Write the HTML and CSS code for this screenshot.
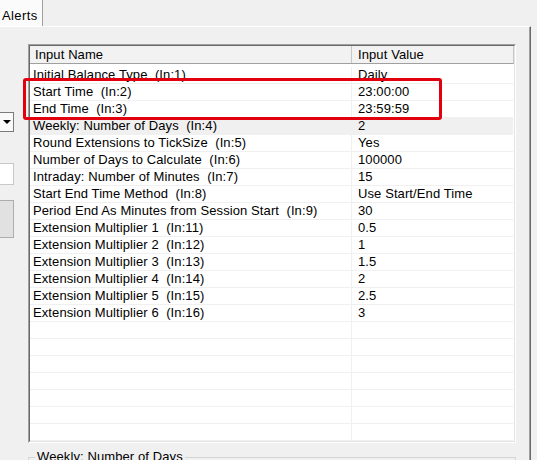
FILE: index.html
```html
<!DOCTYPE html>
<html>
<head>
<meta charset="utf-8">
<link rel="stylesheet" href="styles.css">
</head>
<body>
<div class="tabs"><div class="tab">Alerts</div></div>
<div class="panel">
  <div class="side">
    <div class="combo"><span class="arrow"></span></div>
    <div class="textbox"></div>
    <div class="button"></div>
  </div>
  <div class="main">
    <div class="grid">
      <div class="grid-inner">
        <div class="hrow"><div class="hcell first">Input Name</div><div class="hcell">Input Value</div></div>
        <div class="gap"></div>
        <div class="row"><div class="cell name">Initial Balance Type&nbsp;&nbsp;(In:1)</div><div class="cell val">Daily</div></div>
        <div class="row"><div class="cell name">Start Time&nbsp;&nbsp;(In:2)</div><div class="cell val">23:00:00</div></div>
        <div class="row"><div class="cell name">End Time&nbsp;&nbsp;(In:3)</div><div class="cell val">23:59:59</div></div>
        <div class="row sel"><div class="cell name">Weekly: Number of Days&nbsp;&nbsp;(In:4)</div><div class="cell val">2</div></div>
        <div class="row"><div class="cell name">Round Extensions to TickSize&nbsp;&nbsp;(In:5)</div><div class="cell val">Yes</div></div>
        <div class="row"><div class="cell name">Number of Days to Calculate&nbsp;&nbsp;(In:6)</div><div class="cell val">100000</div></div>
        <div class="row"><div class="cell name">Intraday: Number of Minutes&nbsp;&nbsp;(In:7)</div><div class="cell val">15</div></div>
        <div class="row"><div class="cell name">Start End Time Method&nbsp;&nbsp;(In:8)</div><div class="cell val">Use Start/End Time</div></div>
        <div class="row"><div class="cell name">Period End As Minutes from Session Start&nbsp;&nbsp;(In:9)</div><div class="cell val">30</div></div>
        <div class="row"><div class="cell name">Extension Multiplier 1&nbsp;&nbsp;(In:11)</div><div class="cell val">0.5</div></div>
        <div class="row"><div class="cell name">Extension Multiplier 2&nbsp;&nbsp;(In:12)</div><div class="cell val">1</div></div>
        <div class="row"><div class="cell name">Extension Multiplier 3&nbsp;&nbsp;(In:13)</div><div class="cell val">1.5</div></div>
        <div class="row"><div class="cell name">Extension Multiplier 4&nbsp;&nbsp;(In:14)</div><div class="cell val">2</div></div>
        <div class="row"><div class="cell name">Extension Multiplier 5&nbsp;&nbsp;(In:15)</div><div class="cell val">2.5</div></div>
        <div class="row"><div class="cell name">Extension Multiplier 6&nbsp;&nbsp;(In:16)</div><div class="cell val">3</div></div>
        <div class="row"><div class="cell name"></div><div class="cell val"></div></div>
        <div class="row"><div class="cell name"></div><div class="cell val"></div></div>
        <div class="row"><div class="cell name"></div><div class="cell val"></div></div>
        <div class="row"><div class="cell name"></div><div class="cell val"></div></div>
        <div class="row"><div class="cell name"></div><div class="cell val"></div></div>
        <div class="row"><div class="cell name"></div><div class="cell val"></div></div>
        <div class="row"><div class="cell name"></div><div class="cell val"></div></div>
      </div>
    </div>
    <div class="group"><span class="legend">Weekly: Number of Days</span></div>
  </div>
</div>
<div class="highlight"></div>
</body>
</html>
```
FILE: styles.css
```css
html, body {
  margin: 0;
  padding: 0;
}
body {
  width: 537px;
  height: 460px;
  overflow: hidden;
  position: relative;
  background: #f0f0f0;
  font-family: "Liberation Sans", Arial, sans-serif;
  font-size: 13px;
  letter-spacing: 0.1px;
  color: #000;
}
.tabs {
  height: 26px;
  display: flex;
}
.tab {
  width: 43px;
  height: 26px;
  box-sizing: border-box;
  background: #fbfbfb;
  border-right: 1px solid #a0a0a0;
  padding: 8px 0 0 2px;
  line-height: 15px;
  letter-spacing: 0.4px;
}
.panel {
  width: 531px;
  height: 434px;
  box-sizing: border-box;
  border-top: 1px solid #ffffff;
  border-right: 1px solid #696969;
  box-shadow: inset -1px 0 #a0a0a0;
  display: flex;
  padding-top: 17px;
}
.side {
  width: 14px;
  margin-right: 14px;
  display: flex;
  flex-direction: column;
}
.combo {
  margin-top: 68px;
  height: 20px;
  box-sizing: border-box;
  background: #fafafa;
  border: 1px solid #7a7a7a;
  border-left: none;
  position: relative;
}
.arrow {
  position: absolute;
  left: 3px;
  top: 7px;
  width: 0;
  height: 0;
  border-left: 4px solid transparent;
  border-right: 4px solid transparent;
  border-top: 4px solid #000;
}
.textbox {
  margin-top: 31px;
  height: 22px;
  box-sizing: border-box;
  background: #fff;
  border: 1px solid #c8c8c8;
  border-left: none;
}
.button {
  margin-top: 15px;
  height: 38px;
  box-sizing: border-box;
  background: #e1e1e1;
  border: 1px solid #adadad;
  border-left: none;
}
.main {
  width: 488px;
  display: flex;
  flex-direction: column;
}
.grid {
  width: 488px;
  height: 399px;
  box-sizing: border-box;
  border: 1px solid;
  border-color: #a0a0a0 #ffffff #ffffff #a0a0a0;
}
.grid-inner {
  height: 100%;
  box-sizing: border-box;
  border: 1px solid;
  border-color: #696969 #e3e3e3 #e3e3e3 #696969;
  background: #fff;
  overflow: hidden;
}
.hrow {
  display: grid;
  grid-template-columns: 322px 1fr;
  height: 18px;
  box-sizing: border-box;
  background: #f2f2f2;
  border-bottom: 1px solid #a0a0a0;
  border-right: 1px solid #c8c8c8;
}
.hcell {
  line-height: 17px;
  padding-left: 5px;
}
.hcell.first {
  border-right: 1px solid #c8c8c8;
}
.hcell + .hcell {
  padding-left: 6px;
}
.gap {
  height: 3px;
}
.row {
  display: grid;
  grid-template-columns: 322px 1fr;
  height: 17px;
  box-sizing: border-box;
  border-bottom: 1px solid #f0f0f0;
  margin-right: 1px;
}
.row.sel {
  background: #f0f0f0;
}
.cell {
  line-height: 16px;
  white-space: nowrap;
  overflow: hidden;
}
.cell.name {
  padding-left: 3px;
  border-right: 1px solid #f0f0f0;
}
.cell.val {
  padding-left: 6px;
}
.group {
  margin-top: 14px;
  height: 20px;
  box-sizing: border-box;
  border: 1px solid #d5d5d5;
  border-bottom: none;
}
.legend {
  display: inline-block;
  margin-top: -9px;
  margin-left: 6px;
  padding: 0 2px;
  background: #f0f0f0;
  line-height: 15px;
  vertical-align: top;
}
.highlight {
  position: absolute;
  left: 23px;
  top: 78px;
  width: 419px;
  height: 42px;
  box-sizing: border-box;
  border: 3px solid #e2000f;
  border-radius: 3px;
}
```
